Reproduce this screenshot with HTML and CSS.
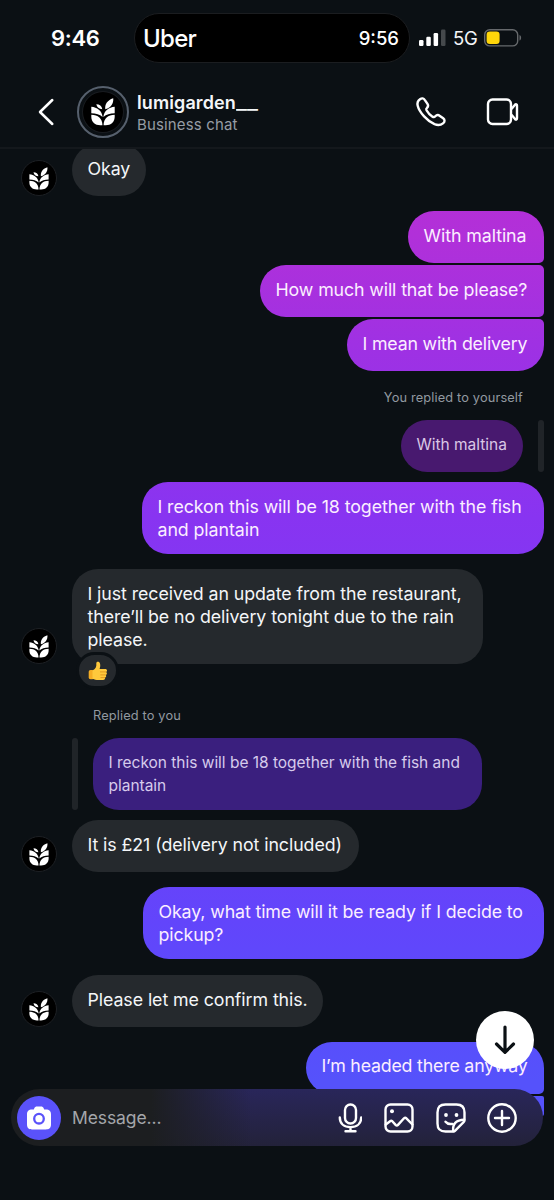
FILE: index.html
```html
<!DOCTYPE html>
<html lang="en">
<head>
<meta charset="utf-8">
<title>lumigarden__</title>
<link rel="stylesheet" href="styles.css">
</head>
<body>
<svg width="0" height="0" class="defs">
  <symbol id="leaf" viewBox="0 0 24 28">
    <path d="M22.200 .2C22.800 4.500 20.500 9.500 14.300 11.300 13.600 6.500 16 2.200 22.200 .2z"/>
    <path d="M5.300 6.300c3.300 0 5.400 1.700 6 5-3.300-.2-5.400-1.900-6-5z"/>
    <path d="M.3 8.800C6 9.200 11 12.800 11.600 18.900 8.700 16.400 5 15.300.3 15.200z"/>
    <path d="M23.700 8.800C18 9.200 13 12.800 12.400 18.900c2.900-2.500 6.600-3.600 11.300-3.700z"/>
    <path d="M.3 16.800C7 16.900 11.400 20.500 11.400 27.300H9.300C4 27.300.3 24 .3 18.800z"/>
    <path d="M23.700 16.800C17 16.900 12.600 20.500 12.600 27.300h2.100c5.300 0 9-3.300 9-8.500z"/>
  </symbol>
</svg>
<div class="phone">
  <header class="top">
    <div class="status">
      <span class="clock">9:46</span>
      <div class="island"><span class="uber">Uber</span><span class="eta">9:56</span></div>
      <svg class="signal" width="27" height="18" viewBox="0 0 27 18"><rect x="0" y="11" width="4.500" height="6" rx="1.200" fill="#fff"/><rect x="7.300" y="7.800" width="4.500" height="9.200" rx="1.200" fill="#fff"/><rect x="14.600" y="4" width="4.500" height="13" rx="1.200" fill="#fff"/><rect x="22" y="0.500" width="4.500" height="16.500" rx="1.200" fill="#45494c"/></svg>
      <span class="net">5G</span>
      <svg class="battery" width="38" height="18" viewBox="0 0 38 18"><rect x=".7" y=".7" width="33" height="16.200" rx="5" fill="none" stroke="#66696c" stroke-width="1.400"/><rect x="2.600" y="2.600" width="13" height="12.400" rx="3.200" fill="#ffd60a"/><path d="M35.500 6v5.600c2.200-.7 2.200-4.900 0-5.600z" fill="#66696c"/></svg>
    </div>
    <div class="nav">
      <svg class="back" width="18" height="30" viewBox="0 0 18 30"><path d="M15.300 3 3 15l12.300 12"/></svg>
      <div class="ring"><svg width="24" height="28"><use href="#leaf"/></svg></div>
      <div class="who"><b>lumigarden<span class="tail">__</span></b><span class="kind">Business chat</span></div>
      <svg class="call" width="32" height="32" viewBox="0 0 32 32"><path d="M5 3.200C3 4.600 2 6.800 2.700 9.700c1.700 6.800 9.800 15.500 16.800 18.500 3 1.200 6 1.200 8.500-.8 2.100-1.700 1.900-3.900.2-5.200l-3.300-2.300c-1.900-1.300-3.200-1.100-4.600.4-.9 1-1.700 1.100-2.800.4-2.600-1.700-4.700-4-6-6.400-.5-1-.4-1.700.5-2.500 1.300-1.200 1.500-2.400.5-3.900L9.900 4.100C8.600 2.100 6.900 1.900 5 3.200z"/></svg>
      <svg class="video" width="34" height="30" viewBox="0 0 34 30"><rect x="2" y="2.500" width="23" height="24.500" rx="4.500"/><path d="M25.500 12l3.500-4.300c.9-.9 2-.5 2 .8v12.800c0 1.300-1.100 1.700-2 .8l-3.500-4.300"/></svg>
    </div>
  </header>

  <main class="thread">
    <div class="row first"><i class="avatar"><svg width="20" height="23"><use href="#leaf"/></svg></i><p class="bubble in w-okay">Okay</p></div>
    <p class="bubble out start w-m1">With maltina</p>
    <p class="bubble out mid w-m2">How much will that be please?</p>
    <p class="bubble out end w-m3">I mean with delivery</p>
    <p class="note self">You replied to yourself</p>
    <div class="quote mine"><p class="bubble quoted violet">With maltina</p><i class="bar"></i></div>
    <p class="bubble out w-m4">I reckon this will be 18 together with the fish<br>and plantain</p>
    <div class="row r1"><i class="avatar"><svg width="20" height="23"><use href="#leaf"/></svg></i>
      <div class="reacted"><p class="bubble in w-r1">I just received an update from the restaurant,<br>there’ll be no delivery tonight due to the rain<br>please.</p>
      <span class="reaction"><svg width="20" height="20" viewBox="0 0 20 20"><rect x=".7" y="9" width="5.500" height="9.300" rx="1.800" fill="#f5ad24"/><path d="M4.500 9.600C7.500 8 8.700 5.800 8.300 2.500 8.100.6 11 .1 11.900 2.300c.7 1.900.3 4-.3 5.600h5.700c2 0 2.300 2.400.8 3 1.300.8 1 2.700-.3 3 .8 1 .4 2.400-.8 2.700.5 1.400-.5 2.400-2 2.400h-4.500c-2.500 0-4-.6-6-1.300z" fill="#ffc93c"/><path d="M12 10.900h6M12.300 13.900h5.500M12.500 16.600H17" stroke="#d98b18" stroke-width=".8"/></svg></span></div>
    </div>
    <p class="note other">Replied to you</p>
    <div class="quote theirs"><i class="bar"></i><p class="bubble quoted indigo">I reckon this will be 18 together with the fish and<br>plantain</p></div>
    <div class="row r2"><i class="avatar"><svg width="20" height="23"><use href="#leaf"/></svg></i><p class="bubble in w-r2">It is £21 (delivery not included)</p></div>
    <p class="bubble out w-m5">Okay, what time will it be ready if I decide to<br>pickup?</p>
    <div class="row r3"><i class="avatar"><svg width="20" height="23"><use href="#leaf"/></svg></i><p class="bubble in w-r3">Please let me confirm this.</p></div>
    <p class="bubble out start w-m6">I’m headed there anyway</p>
    <p class="bubble out mid w-m7"></p>
  </main>

  <div class="jump"><svg width="24" height="32" viewBox="0 0 24 32"><path d="M12 3v25M3.500 20l8.500 8.300 8.500-8.300"/></svg></div>

  <footer class="composer">
    <span class="camera"><svg width="26" height="26" viewBox="0 0 26 26"><path fill="#fff" d="M8.200 3.500C8.800 2 9.700 1.500 11 1.500h4c1.300 0 2.200.5 2.800 2l.4.900h1.600c3.700 0 5.200 1.700 5.200 5v9.800c0 3.500-1.600 5.200-5.200 5.200H6.200C2.600 24.400 1 22.700 1 19.200V9.400c0-3.300 1.500-5 5.200-5h1.600z"/><circle cx="13" cy="13.700" r="4.800" fill="none" stroke="#5a52fa" stroke-width="2.300"/></svg></span>
    <span class="hint">Message...</span>
    <svg class="ico mic" width="24" height="30" viewBox="0 0 24 30"><rect x="7" y="1.500" width="11" height="19" rx="5.500"/><path d="M1.800 14.500c0 6.300 4.500 9.700 10.700 9.700s10.700-3.400 10.700-9.700M12.500 24.200v4M7.500 28.200h10"/></svg>
    <svg class="ico pic" width="30" height="30" viewBox="0 0 30 30"><rect x="1.500" y="1.500" width="27" height="27" rx="5"/><circle cx="8" cy="8.300" r="2" class="dot"/><path d="M1.800 21.500l4.300-3.300c.8-.6 1.500-.6 2.200 0l3.300 3.700c.8.800 1.700.8 2.400 0l6-6.600c.8-.8 1.600-.8 2.400 0l6 6.200"/></svg>
    <svg class="ico sticker" width="30" height="30" viewBox="0 0 30 30"><path d="M17.500 28.500H9.500c-5.500 0-8-2.500-8-8v-11c0-5.500 2.500-8 8-8h11c5.500 0 8 2.500 8 8v7.800c0 .8-.3 1.300-.9 1.900l-8.400 8.400c-.5.500-1 .9-1.700.9z"/><path d="M17.200 28c-.8-6.500 2.500-11.300 11-11.300M9.500 18.800c1.500 1.900 4 2.600 6.800 2.100"/><circle cx="10" cy="12" r="1.900" class="dot"/><circle cx="20.500" cy="12" r="1.900" class="dot"/></svg>
    <svg class="ico plus" width="30" height="30" viewBox="0 0 30 30"><circle cx="15" cy="15" r="13.700"/><path d="M15 8v14M8 15h14"/></svg>
  </footer>
</div>
</body>
</html>
```
FILE: styles.css
```css
* { box-sizing: border-box; }
body { margin: 0; background: #0b1014; color: #f4f6f8; font-family: Inter, "Liberation Sans", sans-serif; }
p { margin: 0; }
svg { display: block; flex: none; }
.defs { position: absolute; }
.phone { position: relative; width: 554px; height: 1200px; overflow: hidden; display: flex; flex-direction: column; }

.top { height: 149px; flex: none; border-bottom: 2px solid #14181c; }
.status { display: flex; align-items: center; height: 76px; padding-left: 51px; white-space: nowrap; }
.clock { width: 83px; font-size: 22px; font-weight: 600; color: #fff; letter-spacing: -.3px; }
.island { width: 276px; height: 50px; border-radius: 25px; background: #000; border: 1px solid #1b1d20; display: flex; align-items: center; justify-content: space-between; padding: 0 10px 0 8px; color: #fff; }
.uber { font-size: 24px; font-weight: 500; letter-spacing: -.7px; }
.eta { font-size: 18.500px; font-weight: 500; }
.signal { margin-left: 9px; }
.net { width: 25px; margin: 0 6px 0 7px; font-size: 18.500px; font-weight: 400; letter-spacing: -.3px; }
.nav { display: flex; align-items: center; height: 71px; padding-left: 37px; }
.back { fill: none; stroke: #fff; stroke-width: 2.500; stroke-linecap: round; stroke-linejoin: round; }
.ring { width: 52px; height: 52px; margin-left: 22px; border-radius: 50%; border: 2px solid #56606d; background: #000; box-shadow: inset 0 0 0 3px #0b1014, inset 0 0 0 4px #191c20; display: flex; align-items: center; justify-content: center; fill: #fff; }
.who { width: 278px; margin-left: 8px; padding-top: 4px; display: flex; flex-direction: column; }
.who b { font-size: 18px; line-height: 22px; font-weight: 600; letter-spacing: .1px; }
.tail { display: inline-block; transform: scaleX(1.300); transform-origin: left; }
.kind { font-size: 15px; line-height: 22px; color: #969da4; letter-spacing: .15px; }
.call, .video { fill: none; stroke: #fff; stroke-width: 2.400; stroke-linejoin: round; }
.video { margin-left: 39px; }

.thread { flex: 1; overflow: hidden; display: flex; flex-direction: column; align-items: flex-start; }
.row { display: flex; align-items: flex-end; padding-left: 21px; }
.row.first { margin-top: -5px; margin-bottom: 15px; }
.avatar { width: 36px; height: 36px; margin-right: 15px; border-radius: 50%; border: 1px solid #1d2024; background: #000; display: flex; align-items: center; justify-content: center; fill: #fff; }
.bubble { min-height: 52px; padding: 12.700px 0 0 15.500px; border-radius: 26px; font-size: 17.800px; line-height: 23.300px; letter-spacing: -.08px; white-space: nowrap; flex: none; }
.in { background: #25292d; }
.out { align-self: flex-end; margin-right: 10px; color: #fbeeff; background: linear-gradient(#c52bcb 0, #b130d9 235px, #9f31e3 344px, #8834f1 518px, #6245fb 923px, #5552fb 1080px) fixed; }
.start { border-bottom-right-radius: 5px; margin-bottom: 2px; }
.mid { border-top-right-radius: 5px; border-bottom-right-radius: 5px; margin-bottom: 2px; }
.end { border-top-right-radius: 5px; }
.w-okay { width: 74px; }
.w-m1 { width: 136px; }
.w-m2 { width: 284px; letter-spacing: -.12px; }
.w-m3 { width: 197px; letter-spacing: -.18px; }
.w-m4 { width: 402px; height: 72px; }
.w-r1 { width: 411px; height: 95px; }
.w-r2 { width: 287px; }
.w-m5 { width: 401px; height: 72px; letter-spacing: -.12px; }
.w-r3 { width: 251px; }
.w-m6 { width: 238px; letter-spacing: -.2px; }
.w-m7 { width: 200px; min-height: 0; height: 20px; }
.note { font-size: 12.800px; line-height: 18px; color: #9299a0; letter-spacing: .14px; }
.self { align-self: flex-end; margin: 18px 31px 13px 0; }
.quote { display: flex; }
.mine { align-self: flex-end; margin: 0 10px 10px 0; gap: 15px; }
.bar { width: 6px; border-radius: 3px; background: #202428; }
.quoted { font-size: 15.500px; letter-spacing: -.02px; }
.violet { width: 122px; color: #dac7e5; background: #48196f; }
.r1 { margin-top: 15px; }
.reacted { position: relative; }
.reaction { position: absolute; left: 4px; top: 83px; width: 43px; height: 37px; border: 3px solid #0b1014; border-radius: 19px; background: #25292d; display: flex; align-items: center; justify-content: center; }
.other { margin: 43px 0 13px 93px; }
.theirs { padding-left: 72px; gap: 15px; }
.indigo { width: 389px; height: 72px; color: #d6cbec; background: #3a1f7e; }
.r2 { margin: 10px 0 15px; }
.r3 { margin: 16px 0 14.500px; }

.jump { position: absolute; left: 476px; top: 1011px; width: 58px; height: 58px; border-radius: 50%; background: #fff; display: flex; align-items: center; justify-content: center; fill: none; stroke: #0b1014; stroke-width: 3.200; stroke-linecap: round; stroke-linejoin: round; }
.composer { position: absolute; left: 11px; top: 1089px; width: 532px; height: 57px; border-radius: 28.500px; display: flex; align-items: center; padding-left: 6px; background: linear-gradient(90deg, #1c1e20 0, #1c1e20 140px, #1c1e2000 240px), linear-gradient(#29265a, #23223a); }
.camera { width: 44px; height: 44px; border-radius: 50%; background: #5a52fa; display: flex; align-items: center; justify-content: center; }
.hint { width: 266px; margin-left: 11px; font-size: 17.500px; letter-spacing: -.1px; color: #a4a6aa; }
.ico { fill: none; stroke: #fff; stroke-width: 2.400; stroke-linecap: round; stroke-linejoin: round; }
.ico .dot { fill: #fff; stroke: none; }
.pic { margin-left: 22px; }
.sticker { margin-left: 21.500px; }
.plus { margin-left: 21.500px; }
```
